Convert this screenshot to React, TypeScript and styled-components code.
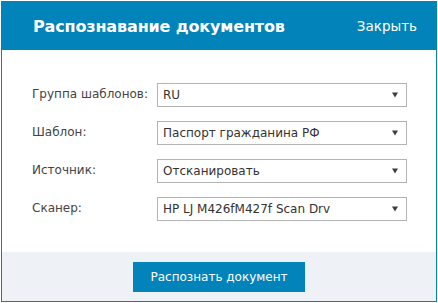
import React from 'react';
import styled, { createGlobalStyle } from 'styled-components';

const GlobalStyle = createGlobalStyle`
  html, body {
    margin: 0;
    padding: 0;
    background: #ffffff;
  }
  body {
    font-family: "DejaVu Sans", Verdana, sans-serif;
  }
`;

const Dialog = styled.div`
  margin: 1px;
  width: 436px;
  height: 301px;
  box-sizing: border-box;
  border: 1px solid #0284bb;
  display: flex;
  flex-direction: column;
  background: #ffffff;
`;

const Header = styled.div`
  height: 48px;
  flex-shrink: 0;
  background: #0284bb;
  display: flex;
  align-items: center;
  justify-content: space-between;
  padding: 0 19px 0 31px;
`;

const Title = styled.h2`
  margin: 0;
  color: #ffffff;
  font-size: 16px;
  font-weight: 700;
  letter-spacing: -0.15px;
`;

const CloseLink = styled.span`
  color: #ffffff;
  font-size: 13.5px;
  cursor: pointer;
`;

const Body = styled.div`
  flex: 1;
  padding: 33px 0 30px 30px;
  display: flex;
  flex-direction: column;
  gap: 14px;
`;

const Row = styled.div`
  display: flex;
  align-items: center;
`;

const Label = styled.label`
  width: 125px;
  flex-shrink: 0;
  color: #444444;
  font-size: 12px;
  margin-top: -2px;
`;

const Select = styled.div`
  width: 250px;
  height: 24px;
  box-sizing: border-box;
  border: 1px solid #b4b4b4;
  background: #ffffff;
  display: flex;
  align-items: center;
  justify-content: space-between;
  padding: 0 8px 0 5px;
  color: #333333;
  font-size: 12px;
`;

const Arrow = styled.svg`
  width: 6px;
  height: 6px;
  fill: #3c3c3c;
`;

const Footer = styled.div`
  height: 49px;
  flex-shrink: 0;
  background: #eef2f7;
  display: flex;
  justify-content: center;
  align-items: flex-start;
  padding-top: 10px;
  box-sizing: border-box;
`;

const PrimaryButton = styled.button`
  width: 172px;
  height: 30px;
  border: none;
  background: #0284bb;
  color: #ffffff;
  font-family: "DejaVu Sans", Verdana, sans-serif;
  font-size: 12px;
  cursor: pointer;
`;

const fields = [
  { label: 'Группа шаблонов:', value: 'RU' },
  { label: 'Шаблон:', value: 'Паспорт гражданина РФ' },
  { label: 'Источник:', value: 'Отсканировать' },
  { label: 'Сканер:', value: 'HP LJ M426fM427f Scan Drv' },
];

export default function App() {
  return (
    <>
      <GlobalStyle />
      <Dialog>
        <Header>
          <Title>Распознавание документов</Title>
          <CloseLink>Закрыть</CloseLink>
        </Header>
        <Body>
          {fields.map((f) => (
            <Row key={f.label}>
              <Label>{f.label}</Label>
              <Select>
                <span>{f.value}</span>
                <Arrow viewBox="0 0 6 6">
                  <path d="M0 0.5 H6 L3 5.5 Z" />
                </Arrow>
              </Select>
            </Row>
          ))}
        </Body>
        <Footer>
          <PrimaryButton>Распознать документ</PrimaryButton>
        </Footer>
      </Dialog>
    </>
  );
}
